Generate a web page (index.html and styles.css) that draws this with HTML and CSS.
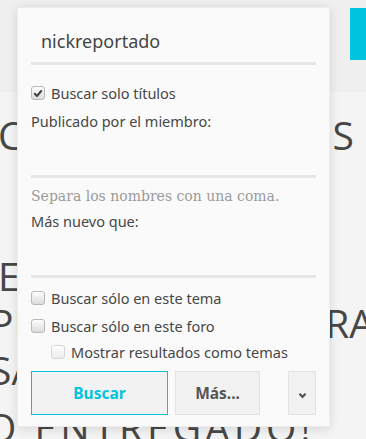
FILE: index.html
```html
<!DOCTYPE html>
<html lang="es">
<head>
<meta name="viewport" content="width=device-width, initial-scale=1">
<link rel="stylesheet" href="styles.css">
</head>
<body>
	<div id="topBar"><div id="cyanTab"></div></div>

	<div id="heading">
		<div class="line l1"><span>C</span><span>S</span></div>
		<div class="line"><span></span><span></span></div>
		<div class="line"><span></span><span></span></div>
		<div class="line l4"><span>E</span><span></span></div>
		<div class="line"><span>PR</span><span>RA</span></div>
		<div class="line"><span>SA</span><span></span></div>
		<div class="line indent"><span>O ENTREGADO!</span></div>
	</div>

	<div id="searchMenu">
		<div class="field first">nickreportado</div>

		<label class="check row1"><span class="box checked"><svg viewBox="0 0 13 13" width="13" height="13"><path d="M3 6.8 L5.4 9.2 L10 3.8" fill="none" stroke="#444" stroke-width="2.2" stroke-linecap="round" stroke-linejoin="round"/></svg></span>Buscar solo títulos</label>

		<div class="label first">Publicado por el miembro:</div>
		<div class="field"></div>
		<div class="hint">Separa los nombres con una coma.</div>

		<div class="label">Más nuevo que:</div>
		<div class="field"></div>

		<label class="check row2"><span class="box"></span>Buscar sólo en este tema</label>
		<label class="check row3"><span class="box"></span>Buscar sólo en este foro</label>
		<label class="check row4 sub"><span class="box faded"></span>Mostrar resultados como temas</label>

		<div id="buttons">
			<button class="primary">Buscar</button>
			<button class="more">Más...</button>
			<span class="spacer"></span>
			<button class="menu"><svg viewBox="0 0 10 8" width="9" height="7"><path d="M1.5 2 L5 5.5 L8.5 2" fill="none" stroke="#555" stroke-width="2.6"/></svg></button>
		</div>
	</div>
</body>
</html>
```

FILE: styles.css
```css
:root {
	--main-cyan:#00c4dd;
	--main-text:#474747;
	--main-line:#e6e6e6;
}

* {
	box-sizing:border-box;
}

html, body {
	margin:0;
	height:100vh;
	overflow:hidden;
}

body {
	background-color:#f4f4f4;
	font-family:"Open Sans", sans-serif;
	color:var(--main-text);
}

#topBar{
	height:92px;
	background-color:#efefef;
	display:flex;
	justify-content:flex-end;
	padding-top:8px;
}

#cyanTab{
	width:16px;
	height:52px;
	background-color:var(--main-cyan);
}

#heading{
	font-size:39px;
	line-height:47px;
	color:#474747;
	margin-top:19px;
}

#heading .line{
	display:flex;
	justify-content:space-between;
	height:47px;
	white-space:nowrap;
}

#heading .line span:first-child{
	margin-left:-10px;
}

#heading .line span:last-child{
	margin-right:-8px;
}

#heading .l1 span:first-child{
	margin-left:-2px;
}

#heading .l1 span:last-child{
	margin-right:12px;
}

#heading .l4 span:first-child{
	margin-left:-2px;
}

#heading .indent{
	margin-top:10px;
}

#heading .indent span:first-child{
	margin-left:-14px;
	letter-spacing:4px;
}

#searchMenu{
	position:absolute;
	left:17px;
	top:7px;
	width:313px;
	height:420px;
	padding:13px;
	background-color:#fafafa;
	border:1px solid #ececec;
	box-shadow:0 2px 10px rgba(0,0,0,0.12);
	display:flex;
	flex-direction:column;
	font-family:"Noto Sans", sans-serif;
	font-size:14.5px;
	line-height:20px;
}

.field{
	height:44px;
	flex-shrink:0;
	border-bottom:3px solid var(--main-line);
	margin-top:3px;
	padding:8px 10px 0;
	font-size:18px;
	line-height:24px;
	color:#444;
}

.field.first{
	margin-top:0;
}

.check{
	display:flex;
	align-items:center;
	gap:6px;
	height:20px;
}

.row1{ margin-top:18px; }
.row2{ margin-top:10px; }
.row3{ margin-top:8px; }
.row4{ margin-top:6px; }

.sub{
	padding-left:20px;
}

.box{
	width:14px;
	height:14px;
	border:1px solid #b9b9b9;
	border-radius:3px;
	background:linear-gradient(#fdfdfd, #dcdcdc);
	display:flex;
	align-items:center;
	justify-content:center;
}

.box.faded{
	border-color:#d6d6d6;
	background:linear-gradient(#ffffff, #ececec);
}

.label{
	margin-top:5px;
}

.label.first{
	margin-top:8px;
}

.hint{
	margin-top:8px;
	font-family:"DejaVu Serif", serif;
	font-size:14px;
	color:#9a9a9a;
}

#buttons{
	display:flex;
	margin-top:9px;
	gap:7px;
}

#buttons button{
	height:44px;
	font-family:"Noto Sans", sans-serif;
	font-size:15.5px;
	font-weight:bold;
	background-color:#f2f2f2;
	border:1px solid #e3e3e3;
	color:#555;
	padding:0;
}

#buttons .primary{
	width:137px;
	border:1px solid var(--main-cyan);
	color:var(--main-cyan);
}

#buttons .more{
	width:85px;
}

#buttons .spacer{
	flex:1;
}

#buttons .menu{
	width:28px;
}
```
